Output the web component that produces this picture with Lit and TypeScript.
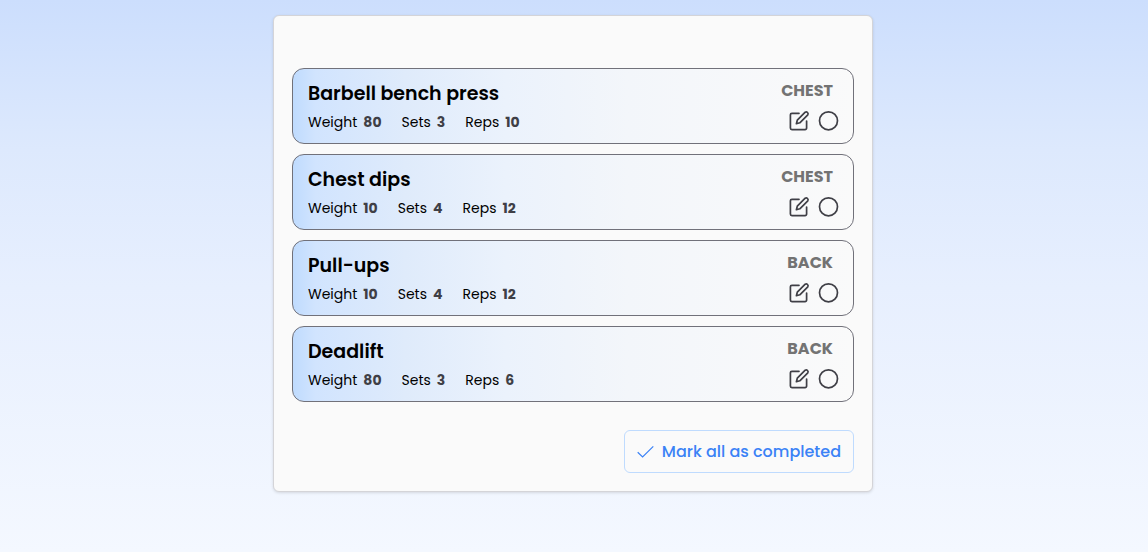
import { LitElement, html, css } from "lit";
import { customElement, property, state } from "lit/decorators.js";

interface Exercise {
  name: string;
  weight: number;
  sets: number;
  reps: number;
  group: string;
}

const EXERCISES: Exercise[] = [
  { name: "Barbell bench press", weight: 80, sets: 3, reps: 10, group: "CHEST" },
  { name: "Chest dips", weight: 10, sets: 4, reps: 12, group: "CHEST" },
  { name: "Pull-ups", weight: 10, sets: 4, reps: 12, group: "BACK" },
  { name: "Deadlift", weight: 80, sets: 3, reps: 6, group: "BACK" },
];

@customElement("exercise-item")
export class ExerciseItem extends LitElement {
  @property({ attribute: false }) exercise!: Exercise;

  static styles = css`
    :host {
      display: flex;
      justify-content: space-between;
      box-sizing: border-box;
      min-height: 76px;
      padding: 9px 12px 9px 15px;
      border: 1px solid #71717a;
      border-radius: 12px;
      background: linear-gradient(
        to right,
        #bfdbfe 0%,
        #d1e4fe 4%,
        #dfebfb 20%,
        #ebf2fc 38%,
        #f3f6fa 60%,
        #fafafa 100%
      );
    }
    .name {
      margin: 0;
      font-size: 19px;
      line-height: 32px;
      font-weight: 600;
      color: #000;
    }
    .stats {
      display: flex;
      gap: 20px;
      margin: 1px 0 0;
      font-size: 14px;
      line-height: 22px;
      color: #000;
    }
    .stat {
      display: flex;
      gap: 6px;
    }
    .value {
      margin: 0;
      font-weight: 700;
      color: #3f3f46;
    }
    .side {
      display: flex;
      flex-direction: column;
      align-items: flex-end;
      gap: 6px;
      padding-top: 1px;
    }
    .group {
      padding-right: 8px;
      font-size: 16px;
      line-height: 24px;
      font-weight: 700;
      color: #737373;
    }
    .actions {
      display: flex;
      gap: 6px;
    }
    .action {
      display: block;
      padding: 0;
      border: 0;
      background: none;
      color: #3f3f46;
      cursor: pointer;
    }
    .icon {
      display: block;
      width: 24px;
      height: 24px;
      fill: none;
      stroke: currentColor;
      stroke-width: 1.7;
      stroke-linecap: round;
      stroke-linejoin: round;
    }
  `;

  private stat(label: string, value: number) {
    return html`<div class="stat"><dt>${label}</dt><dd class="value">${value}</dd></div>`;
  }

  render() {
    const e = this.exercise;
    return html`
      <div>
        <h2 class="name">${e.name}</h2>
        <dl class="stats">
          ${this.stat("Weight", e.weight)} ${this.stat("Sets", e.sets)}
          ${this.stat("Reps", e.reps)}
        </dl>
      </div>
      <div class="side">
        <span class="group">${e.group}</span>
        <div class="actions">
          <button class="action" type="button" aria-label="Edit">
            <svg class="icon" viewBox="0 0 24 24">
              <path d="M12 4.3H4.9a1.5 1.5 0 0 0-1.5 1.5v13.3a1.5 1.5 0 0 0 1.5 1.5h13.2a1.5 1.5 0 0 0 1.5-1.5V12" />
              <path d="M18.2 3.2a1.9 1.9 0 0 1 2.6 2.6L12.8 13.8l-3.4.9.9-3.5z" />
            </svg>
          </button>
          <button class="action" type="button" aria-label="Complete">
            <svg class="icon" viewBox="0 0 24 24"><circle cx="11.5" cy="11.8" r="9" /></svg>
          </button>
        </div>
      </div>
    `;
  }
}

@customElement("app-root")
export class AppRoot extends LitElement {
  @state() private exercises = EXERCISES;

  static styles = css`
    :host {
      display: block;
      box-sizing: border-box;
      min-height: 100vh;
      padding: 15px 2px 15px 0;
      background: linear-gradient(to bottom, #ccdefd 0%, #dde9fd 27%, #e7effe 52%, #f4f8ff 100%);
      font-family: Poppins, Inter, sans-serif;
    }
    .card {
      box-sizing: border-box;
      max-width: 600px;
      margin: 0 auto;
      padding: 52px 18px 18px;
      border: 1px solid #d4d4d8;
      border-radius: 6px;
      background: #fafafa;
      box-shadow: 0 1px 3px rgba(0, 0, 0, 0.12);
    }
    .list {
      display: grid;
      gap: 10px;
      margin: 0;
      padding: 0;
      list-style: none;
    }
    .footer {
      display: flex;
      justify-content: flex-end;
      margin-top: 28px;
    }
    .complete {
      display: flex;
      align-items: center;
      gap: 8px;
      padding: 9px 12px;
      border: 1px solid #bfdbfe;
      border-radius: 6px;
      background: none;
      font-family: inherit;
      font-size: 16px;
      line-height: 23px;
      font-weight: 500;
      color: #3b82f6;
      cursor: pointer;
    }
    .check {
      width: 17px;
      height: 17px;
      fill: none;
      stroke: currentColor;
      stroke-width: 1.2;
    }
  `;

  render() {
    return html`
      <main class="card">
        <ul class="list">
          ${this.exercises.map(
            (e) => html`<li><exercise-item .exercise=${e}></exercise-item></li>`
          )}
        </ul>
        <div class="footer">
          <button class="complete" type="button">
            <svg class="check" viewBox="0 0 17 17"><path d="M.7 9.2 5.6 14 16.3 3.3" /></svg>
            Mark all as completed
          </button>
        </div>
      </main>
    `;
  }
}
